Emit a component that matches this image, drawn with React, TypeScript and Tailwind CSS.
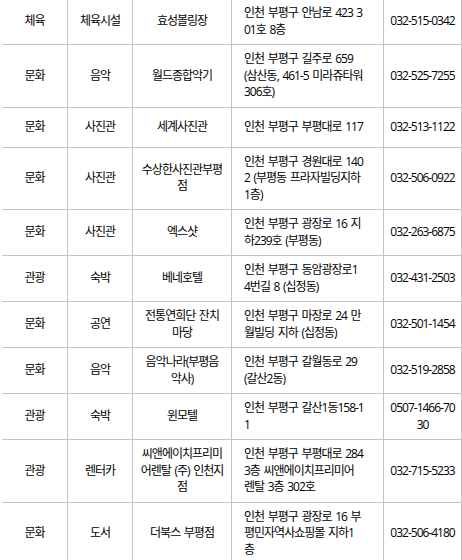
import React from "react";

type Row = { a: string; b: string; c: string[]; d: string[]; e: string[] };

const rows: Row[] = [
  { a: "체육", b: "체육시설", c: ["효성볼링장"], d: ["인천 부평구 안남로 423 3", "01호 8층"], e: ["032-515-0342"] },
  { a: "문화", b: "음악", c: ["월드종합악기"], d: ["인천 부평구 길주로 659", "(삼산동, 461-5 미라쥬타워", "306호)"], e: ["032-525-7255"] },
  { a: "문화", b: "사진관", c: ["세계사진관"], d: ["인천 부평구 부평대로 117"], e: ["032-513-1122"] },
  { a: "문화", b: "사진관", c: ["수상한사진관부평", "점"], d: ["인천 부평구 경원대로 140", "2 (부평동 프라자빌딩지하", "1층)"], e: ["032-506-0922"] },
  { a: "문화", b: "사진관", c: ["엑스샷"], d: ["인천 부평구 광장로 16 지", "하239호 (부평동)"], e: ["032-263-6875"] },
  { a: "관광", b: "숙박", c: ["베네호텔"], d: ["인천 부평구 동암광장로1", "4번길 8 (십정동)"], e: ["032-431-2503"] },
  { a: "문화", b: "공연", c: ["전통연희단 잔치", "마당"], d: ["인천 부평구 마장로 24 만", "월빌딩 지하 (십정동)"], e: ["032-501-1454"] },
  { a: "문화", b: "음악", c: ["음악나라(부평음", "악사)"], d: ["인천 부평구 갈월동로 29", "(갈산2동)"], e: ["032-519-2858"] },
  { a: "관광", b: "숙박", c: ["윈모텔"], d: ["인천 부평구 갈산1동158-1", "1"], e: ["0507-1466-70", "30"] },
  { a: "관광", b: "렌터카", c: ["씨앤에이치프리미", "어렌탈 (주) 인천지", "점"], d: ["인천 부평구 부평대로 284", "3층 씨앤에이치프리미어", "렌탈 3층 302호"], e: ["032-715-5233"] },
  { a: "문화", b: "도서", c: ["더북스 부평점"], d: ["인천 부평구 광장로 16 부", "평민자역사쇼핑몰 지하1", "층"], e: ["032-506-4180"] },
];

function Lines({ lines }: { lines: string[] }) {
  return (
    <div>
      {lines.map((l, i) => (
        <div key={i} className="whitespace-pre">
          {l}
        </div>
      ))}
    </div>
  );
}

export default function App() {
  return (
    <div className="w-[462px] h-[560px] overflow-hidden bg-white">
      <div className="-mt-[1px] pl-[2px] font-['Open_Sans','Noto_Sans_CJK_KR',sans-serif] text-[12px] leading-[16.5px] tracking-[-1px] [word-spacing:1.5px] text-black">
        {rows.map((r, i) => (
          <div
            key={i}
            className="grid grid-cols-[66px_65px_99px_152px_78px] min-h-[40px] border-b border-[#c4c4c4]"
          >
            <div className="flex items-center justify-center text-center border-r border-[#c4c4c4] py-[6px]">
              {r.a}
            </div>
            <div className="flex items-center justify-center text-center border-r border-[#c4c4c4] py-[6px]">
              {r.b}
            </div>
            <div className="flex items-center justify-center text-center border-r border-[#c4c4c4] py-[6px]">
              <Lines lines={r.c} />
            </div>
            <div className="flex items-center justify-start text-left border-r border-[#c4c4c4] py-[6px] pl-[12px]">
              <Lines lines={r.d} />
            </div>
            <div className="flex items-center justify-center text-center border-r border-[#c4c4c4] py-[6px]">
              <Lines lines={r.e} />
            </div>
          </div>
        ))}
      </div>
    </div>
  );
}
